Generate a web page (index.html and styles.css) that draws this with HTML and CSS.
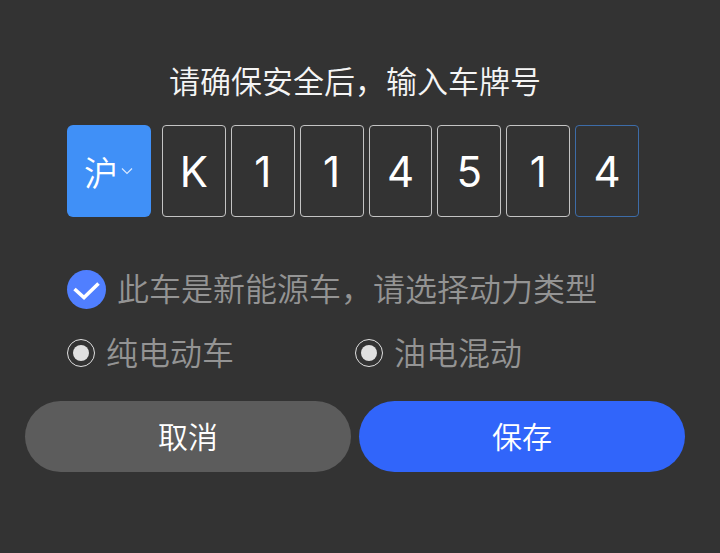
FILE: index.html
```html
<!DOCTYPE html>
<html lang="zh-CN">
<head>
  <meta charset="UTF-8" />
  <meta name="viewport" content="width=device-width, initial-scale=1.0"/>
  <title>输入车牌号</title>
  <link rel="stylesheet" href="styles.css">
</head>
<body>
  <form class="plate-form">
    <h1 class="title">请确保安全后，输入车牌号</h1>

    <!-- 车牌号 -->
    <div class="plate">
      <div class="province">
        <select class="province-select" aria-label="省份">
          <option selected>沪</option>
          <option>京</option>
          <option>粤</option>
          <option>浙</option>
        </select>
        <svg class="arrow" viewBox="0 0 12 8" aria-hidden="true">
          <path d="M1 1.5 L6 6.5 L11 1.5" />
        </svg>
      </div>
      <div class="chars">
        <input type="text" class="char" maxlength="1" value="K" aria-label="第1位" />
        <input type="text" class="char" maxlength="1" value="1" aria-label="第2位" />
        <input type="text" class="char" maxlength="1" value="1" aria-label="第3位" />
        <input type="text" class="char" maxlength="1" value="4" aria-label="第4位" />
        <input type="text" class="char" maxlength="1" value="5" aria-label="第5位" />
        <input type="text" class="char" maxlength="1" value="1" aria-label="第6位" />
        <input type="text" class="char active" maxlength="1" value="4" aria-label="第7位" />
      </div>
    </div>

    <!-- 新能源 -->
    <div class="option energy">
      <span class="check">
        <input type="checkbox" id="energy" class="check-input" checked />
        <svg class="tick" viewBox="0 0 39 39" aria-hidden="true">
          <path d="M7.5 19 L17 27.5 L31.5 13.5" />
        </svg>
      </span>
      <label for="energy">此车是新能源车，请选择动力类型</label>
    </div>

    <div class="power">
      <div class="option">
        <input type="radio" id="electric" name="electric" class="radio" checked />
        <label for="electric">纯电动车</label>
      </div>
      <div class="option">
        <input type="radio" id="hybrid" name="hybrid" class="radio" checked />
        <label for="hybrid">油电混动</label>
      </div>
    </div>

    <div class="actions">
      <button type="button" class="btn cancel">取消</button>
      <button type="button" class="btn save">保存</button>
    </div>
  </form>
</body>
</html>
```

FILE: styles.css
```css
* {
  box-sizing: border-box;
}
body {
  margin: 0;
  background-color: #333333;
  color: #ffffff;
  font-family: "Noto Sans CJK SC", sans-serif;
  font-weight: 350;
}
.plate-form {
  padding: 58px 35px 80px 25px;
}
.title {
  margin: 0 0 23px;
  font-size: 31px;
  line-height: 44px;
  font-weight: 350;
  text-align: center;
  color: #f5f5f5;
}

/* 车牌号 */
.plate {
  display: flex;
  gap: 11px;
  padding: 0 46px 0 42px;
}
.province {
  display: grid;
  flex: none;
  width: 84px;
  height: 92px;
}
.province-select {
  grid-area: 1 / 1;
  appearance: none;
  width: 100%;
  padding: 0 0 0 17px;
  border: none;
  border-radius: 6px;
  background-color: #4090f7;
  color: #ffffff;
  font-family: inherit;
  font-size: 34px;
  font-weight: inherit;
}
.arrow {
  grid-area: 1 / 1;
  align-self: center;
  justify-self: end;
  width: 12px;
  height: 8px;
  margin-right: 18px;
  fill: none;
  stroke: #d8e8ff;
  stroke-width: 1.2;
  pointer-events: none;
}
.chars {
  display: flex;
  flex: 1;
  gap: 5px;
  min-width: 0;
}
.char {
  flex: 1;
  min-width: 0;
  height: 92px;
  padding: 0;
  border: 1px solid #c4c4c4;
  border-radius: 4px;
  background-color: transparent;
  color: #ffffff;
  font-family: Inter, sans-serif;
  font-size: 42px;
  text-align: center;
  outline: none;
}
.char.active {
  border-color: #3d6ca8;
}

/* 选项 */
.option {
  display: flex;
  align-items: center;
  gap: 11px;
  color: #949494;
  font-size: 32px;
  line-height: 44px;
}
.option label {
  padding-bottom: 4px;
}
.energy {
  margin: 48px 42px 16px;
}
.check {
  display: grid;
  width: 39px;
  height: 39px;
}
.check-input {
  grid-area: 1 / 1;
  appearance: none;
  margin: 0;
  border-radius: 50%;
  background-color: #507fff;
}
.tick {
  grid-area: 1 / 1;
  fill: none;
  stroke: #ffffff;
  stroke-width: 3.6;
  pointer-events: none;
}
.power {
  display: grid;
  grid-template-columns: 1fr 1fr;
  gap: 4px;
  padding: 0 46px 0 42px;
}
.radio {
  appearance: none;
  flex: none;
  width: 28px;
  height: 28px;
  margin: 0;
  border: 1px solid #e0e0e0;
  border-radius: 50%;
}
.radio:checked {
  background: #e0e0e0 content-box;
  padding: 5px;
}

/* 按钮 */
.actions {
  display: flex;
  gap: 8px;
  margin-top: 24px;
}
.btn {
  flex: 1;
  height: 71px;
  padding: 0 0 4px;
  border: none;
  border-radius: 36px;
  color: #ffffff;
  font-family: inherit;
  font-size: 30px;
  font-weight: inherit;
}
.cancel {
  background-color: #5c5c5c;
}
.save {
  background-color: #3165fa;
}
```
